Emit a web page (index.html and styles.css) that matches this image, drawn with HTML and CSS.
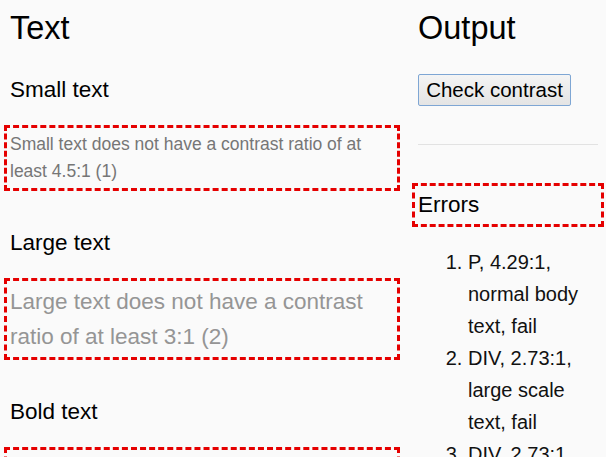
FILE: index.html
```html
<!DOCTYPE html>
<html lang="en">
<head>
<meta charset="utf-8">
<title>Contrast check</title>
<link rel="stylesheet" href="styles.css">
</head>
<body>
<div class="page">
  <section class="col-text">
    <h1 class="title">Text</h1>
    <h2 class="sub">Small text</h2>
    <p class="sample small flagged">Small text does not have a contrast ratio of at least 4.5:1 (1)</p>
    <h2 class="sub">Large text</h2>
    <div class="sample large flagged">Large text does not have a contrast ratio of at least 3:1 (2)</div>
    <h2 class="sub">Bold text</h2>
    <div class="sample bold flagged">Bold text does not have a contrast ratio of at least 3:1 (3)</div>
  </section>
  <section class="col-output">
    <h1 class="title">Output</h1>
    <button class="btn" type="button">Check contrast</button>
    <hr class="rule">
    <h2 class="sub flagged">Errors</h2>
    <ol class="errors">
      <li>P, 4.29:1, normal body text, fail</li>
      <li>DIV, 2.73:1, large scale text, fail</li>
      <li>DIV, 2.73:1, large scale text, fail</li>
    </ol>
  </section>
</div>
</body>
</html>
```
FILE: styles.css
```css
html, body {
  margin: 0;
  padding: 0;
  background: #fafafa;
}
body {
  font-family: "Liberation Sans", Arial, sans-serif;
  color: #000;
  font-size: 20px;
}
.page {
  display: flex;
  gap: 24px;
  padding: 10px 8px 0 10px;
}
.col-text {
  width: 384px;
  flex: none;
}
.col-output {
  width: 180px;
  flex: none;
}
.title {
  font-size: 32.5px;
  font-weight: normal;
  line-height: 37px;
  margin: 0 0 27px;
}
.sub {
  font-size: 22.5px;
  font-weight: normal;
  line-height: 31.5px;
  margin: 0 0 25px;
}
.flagged {
  outline: 3px dashed #e50000;
  outline-offset: 3px;
}
.sample {
  margin: 0 0 42px;
}
.small {
  font-size: 17.5px;
  line-height: 27.3px;
  color: #767676;
}
.large {
  font-size: 22.5px;
  line-height: 35.2px;
  color: #959595;
}
.bold {
  font-size: 19px;
  font-weight: bold;
  line-height: 30px;
  color: #959595;
}
.btn {
  display: block;
  font-family: "Liberation Sans", Arial, sans-serif;
  font-size: 20.5px;
  color: #000;
  height: 32px;
  width: 153px;
  padding: 0;
  margin: 0;
  border: 1px solid #7ea6d4;
  border-radius: 2px;
  background: linear-gradient(#f4f4f4, #e4e4e4);
}
.rule {
  border: 0;
  border-top: 1px solid #e2e2e2;
  height: 0;
  margin: 38px 0 44px;
}
.errors {
  margin: 0;
  padding-left: 50px;
  font-size: 20px;
  line-height: 32px;
  color: #111;
}
```
